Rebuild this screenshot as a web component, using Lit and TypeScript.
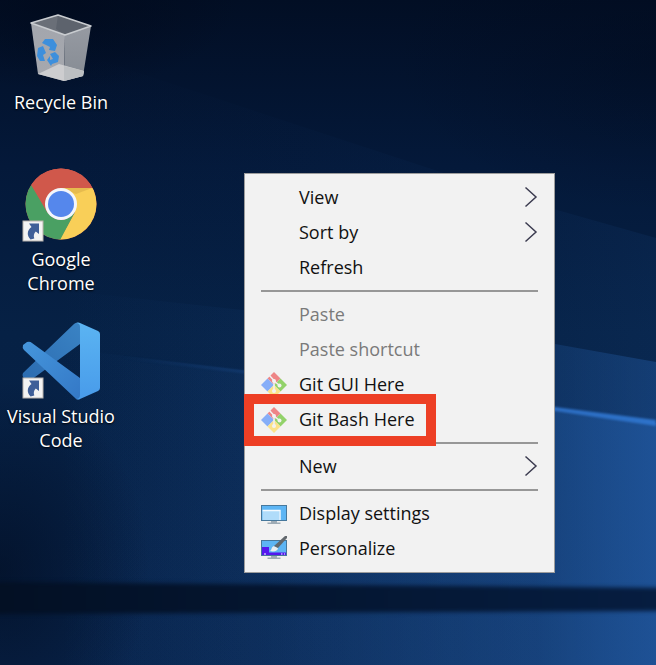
import { LitElement, html, svg, css, nothing } from "lit";
import { customElement } from "lit/decorators.js";

type Entry = { label: string; icon?: string; sub?: boolean; disabled?: boolean; marked?: boolean };

const GROUPS: Entry[][] = [
  [{ label: "View", sub: true }, { label: "Sort by", sub: true }, { label: "Refresh" }],
  [
    { label: "Paste", disabled: true },
    { label: "Paste shortcut", disabled: true },
    { label: "Git GUI Here", icon: "git" },
    { label: "Git Bash Here", icon: "git", marked: true },
  ],
  [{ label: "New", sub: true }],
  [
    { label: "Display settings", icon: "display" },
    { label: "Personalize", icon: "personalize" },
  ],
];

const shortcutArrow = svg`
  <rect x="1" y="55" width="20" height="20" fill="#f3f3f3" stroke="#b9b3ae"/>
  <path d="M7 57.500H17V68L13.800 65.500C11.800 67.500 11.300 69.500 12.300 72.500L8.500 73.500C4.500 69 5 64.500 9.500 61z" fill="#3f5f98"/>`;

const recycleBin = html`<svg class="art" viewBox="0 0 80 76" aria-hidden="true">
  <defs>
    <linearGradient id="bl" x1="0" y1="0" x2="0" y2="1"><stop offset="0" stop-color="#a3a6ad"/><stop offset="1" stop-color="#a6a8ae"/></linearGradient>
    <linearGradient id="br" x1="0" y1="0" x2="0" y2="1"><stop offset="0" stop-color="#969aa2"/><stop offset="1" stop-color="#858b93"/></linearGradient>
  </defs>
  <path d="M9 14 43 26 42 72 16 65z" fill="url(#bl)"/>
  <path d="M43 26 69 17 61 67 42 72z" fill="url(#br)"/>
  <path d="M16 65 37 55 62 62 61 67 42 72z" fill="#cdcdcf"/>
  <path d="M42 57 62 62 61 67 42 72z" fill="#bcbfc2"/>
  <path d="M9 14 36 6 69 17 43 26z" fill="#6a6f78"/>
  <path d="M36 6 69 17 43 26 34 20z" fill="#5d636d"/>
  <path d="M9 14 36 6 69 17 43 26z" fill="none" stroke="#c9ccd0" stroke-width="1.600" stroke-linejoin="round"/>
  <g fill="#3d8fdc">
    <path d="M20 34 23 30H31L35 36 33 42 27 41 28 38 24 36z"/>
    <path d="M16 39 21 37 24 44 21 46 23 52H18L15 47z"/>
    <path d="M28 45 33 43 37 47 36 53 30 55 29 57 25 51 28 47V51L31 50z"/>
  </g>
</svg>`;

const chrome = html`<svg class="art" viewBox="0 0 80 76" aria-hidden="true">
  <defs><clipPath id="cc"><circle cx="39" cy="38" r="35.500"/></clipPath></defs>
  <g clip-path="url(#cc)">
    <rect width="80" height="76" fill="#d0584b"/>
    <path d="M39 22H80V76H30L38 73 53 46z" fill="#f9cf58"/>
    <path d="M8 17 25 46Q32 55 42 54L53 46 37 76H0V0z" fill="#4aa063"/>
    <path d="M10 20 0 0H80V22H39Q26 23 24 41z" fill="#d0584b"/>
    <path d="M39 22H70L54 28z" fill="#d9ae48" opacity=".6"/>
  </g>
  <circle cx="39" cy="38" r="16" fill="#f4f6fb"/>
  <circle cx="39" cy="38" r="13" fill="#5587ec"/>
  ${shortcutArrow}
</svg>`;

const vscode = html`<svg class="art" viewBox="0 0 80 76" aria-hidden="true">
  <defs>
    <linearGradient id="v1" x1="0" y1="0" x2="0" y2="1"><stop offset="0" stop-color="#5bb4f2"/><stop offset="1" stop-color="#489bea"/></linearGradient>
    <linearGradient id="v2" x1="0" y1="0" x2="1" y2="1"><stop offset="0" stop-color="#4596dc"/><stop offset="1" stop-color="#3478c6"/></linearGradient>
    <linearGradient id="v3" x1="0" y1="1" x2="1" y2="0"><stop offset="0" stop-color="#2b6bb0"/><stop offset="1" stop-color="#3a83c4"/></linearGradient>
  </defs>
  <path d="M1 50 52 1Q54-1 58 0V21L9 57Q6 59 4 57L1 54Q0 52 1 50z" fill="url(#v3)"/>
  <path d="M2 27Q0 25 1 22L5 19Q8 18 10 20L58 55V76Q54 77 52 74z" fill="url(#v2)"/>
  <path d="M58 0 76 8Q78 9 78 11V65Q78 67 76 68L58 76Q56 77 54 76 58 76 58 72V4Q58 0 54 0 56-1 58 0z" fill="url(#v1)"/>
  ${shortcutArrow}
</svg>`;

const icons: Record<string, unknown> = {
  git: html`<svg class="icon" viewBox="0 0 26 26" aria-hidden="true">
    <path d="M13 0 19.500 6.500 13 13 6.500 6.500z" fill="#ee8586"/>
    <path d="M6.500 6.500 13 13 6.500 19.500 0 13z" fill="#86aef8"/>
    <path d="M19.500 6.500 26 13 19.500 19.500 13 13z" fill="#92d26a"/>
    <path d="M13 13 19.500 19.500 13 26 6.500 19.500z" fill="#fbe28a"/>
    <path d="M8 3 13 8.500V19M13 9l5 4" fill="none" stroke="#f2f2f2" stroke-width="1.500"/>
    <circle cx="13" cy="9" r="2" fill="#f2f2f2"/><circle cx="18.500" cy="13.500" r="2" fill="#f2f2f2"/><circle cx="13" cy="19" r="2" fill="#f2f2f2"/>
  </svg>`,
  display: html`<svg class="icon" viewBox="0 0 26 26" aria-hidden="true">
    <rect x=".5" y="4.500" width="25" height="15" fill="#5db5f4" stroke="#47789c"/>
    <path d="M1.500 10H18.500V19H1.500z" fill="#b0dcfa"/>
    <path d="M1.500 9.500H19V19" fill="none" stroke="#f4faff" stroke-width="1.400"/>
    <path d="M10 20h6v1.500h3.500v1.500h-13v-1.500H10z" fill="#9eabb5"/>
  </svg>`,
  personalize: html`<svg class="icon" viewBox="0 0 26 26" aria-hidden="true">
    <rect x=".5" y="4.500" width="25" height="15" fill="#5db5f4" stroke="#47789c"/>
    <path d="M1 11H8V16.500H25V19H1z" fill="#5417ee"/>
    <path d="M3 18h2M20 18h1.500M23 18h1" stroke="#fff"/>
    <path d="M9 15c2-1 1-4 4-5l4 2c0 3-4 4-8 3z" fill="#e9edf0"/>
    <path d="M13 10 24 0h2v2L17 12z" fill="#62686d"/>
    <path d="M10 20h6v1.500h3.500v1.500h-13v-1.500H10z" fill="#9eabb5"/>
  </svg>`,
};

const wallpaper = html`<svg class="wallpaper" viewBox="0 0 656 665" preserveAspectRatio="none" aria-hidden="true">
  <defs>
    <linearGradient id="w0" x1="0" y1="0" x2="0" y2="1">
      <stop offset="0" stop-color="#020e24"/><stop offset=".25" stop-color="#04193a"/>
      <stop offset=".5" stop-color="#062145"/><stop offset="1" stop-color="#08234a"/>
    </linearGradient>
    <linearGradient id="w1" gradientUnits="userSpaceOnUse" x1="60" y1="0" x2="656" y2="0">
      <stop offset="0" stop-color="#1f5499" stop-opacity="0"/><stop offset=".35" stop-color="#1f5499" stop-opacity=".2"/>
      <stop offset=".8" stop-color="#1f5499" stop-opacity=".6"/><stop offset="1" stop-color="#2158a0"/>
    </linearGradient>
    <linearGradient id="w2" gradientUnits="userSpaceOnUse" x1="120" y1="0" x2="656" y2="0">
      <stop offset="0" stop-color="#1d4f93" stop-opacity="0"/><stop offset=".3" stop-color="#1d4f93" stop-opacity=".5"/>
      <stop offset=".8" stop-color="#2c6cc0"/><stop offset="1" stop-color="#2e73ca"/>
    </linearGradient>
    <linearGradient id="w3" gradientUnits="userSpaceOnUse" x1="0" y1="0" x2="656" y2="0">
      <stop offset="0" stop-color="#031024"/><stop offset="1" stop-color="#061d40"/>
    </linearGradient>
    <radialGradient id="w4"><stop offset="0" stop-color="#010a1c" stop-opacity=".75"/><stop offset="1" stop-color="#010a1c" stop-opacity="0"/></radialGradient>
    <filter id="s1" x="-5%" y="-20%" width="110%" height="140%" color-interpolation-filters="sRGB"><feGaussianBlur stdDeviation="1"/></filter>
    <filter id="s2" filterUnits="userSpaceOnUse" x="-40" y="560" width="740" height="80" color-interpolation-filters="sRGB"><feGaussianBlur stdDeviation="2"/></filter>
  </defs>
  <rect width="656" height="665" fill="url(#w0)"/>
  <path d="M100 60 550 208 656 238V665H60V60z" fill="url(#w1)" opacity=".12"/>
  <path d="M60 290 555 344 656 362V665H60z" fill="url(#w1)" opacity=".45"/>
  <path d="M60 348 555 408 656 423V665H60z" fill="url(#w1)" opacity=".75"/>
  <path d="M120 356 555 407 656 420V426L555 411 120 358z" fill="url(#w2)" filter="url(#s1)"/>
  <ellipse cx="0" cy="570" rx="150" ry="190" fill="url(#w4)" opacity=".8"/>
  <ellipse cx="60" cy="0" rx="180" ry="90" fill="url(#w4)"/>
  <ellipse cx="656" cy="60" rx="260" ry="150" fill="url(#w4)" opacity=".5"/>
  <path d="M-20 582 680 588V611L-20 614z" fill="url(#w3)" filter="url(#s2)"/>
</svg>`;

@customElement("app-root")
export class AppRoot extends LitElement {
  static styles = css`
    :host { display: block; position: relative; min-height: 100vh; overflow: hidden; background: #04183a;
      font: 18px/24px "Open Sans", "Noto Sans", sans-serif; }
    * { box-sizing: border-box; }
    .wallpaper { position: absolute; inset: 0; width: 100%; height: 100%; }
    .desktop { position: relative; display: grid; grid-auto-rows: 157px; width: 122px; padding-top: 9px; }
    .shortcut { display: flex; flex-direction: column; align-items: center; gap: 5px; height: 144px; padding: 0;
      border: 0; background: none; color: #fff; font: inherit; text-align: center; text-shadow: 0 1px 2px #000; }
    .art { width: 80px; height: 76px; flex: none; margin-left: 2px; overflow: visible; }
    .name { width: 116px; }
    .menu { position: absolute; left: 244px; top: 173px; width: 311px; padding: 6px 0; background: #f2f2f2;
      border: 1px solid #9c9c9c; }
    .group { display: flex; flex-direction: column; }
    .rule { height: 2px; margin: 5px 16px; border: 0; background: #979797; }
    .item { position: relative; display: grid; grid-template-columns: 26px 1fr 14px; column-gap: 12px; align-items: center;
      height: 35px; padding: 0 16px; border: 0; background: none; color: #111; font: inherit; text-align: left; }
    .item:disabled { color: #7a7a7a; }
    .icon { width: 26px; height: 26px; }
    .label { grid-column: 2; padding-bottom: 2px; white-space: nowrap; }
    .chevron { width: 14px; height: 24px; padding-bottom: 2px; }
    .marker { position: absolute; z-index: 1; left: -1px; top: -8px; width: 192px; height: 52px;
      border: 10px solid #ed3f25; pointer-events: none; }
  `;

  private item(e: Entry) {
    return html`<button class="item" role="menuitem" ?disabled=${e.disabled}>
      ${e.icon ? icons[e.icon] : nothing}
      <span class="label">${e.label}</span>
      ${e.sub
        ? html`<svg class="chevron" viewBox="0 0 14 22" aria-hidden="true"><path d="M1.500 1.500 12 11 1.500 20.500" fill="none" stroke="#3c3c50" stroke-width="1.500"/></svg>`
        : nothing}
      ${e.marked ? html`<span class="marker"></span>` : nothing}
    </button>`;
  }

  render() {
    return html`
      ${wallpaper}
      <main class="desktop">
        <button class="shortcut">${recycleBin}<span class="name">Recycle Bin</span></button>
        <button class="shortcut">${chrome}<span class="name">Google Chrome</span></button>
        <button class="shortcut">${vscode}<span class="name">Visual Studio Code</span></button>
      </main>
      <div class="menu" role="menu">
        ${GROUPS.map((g, i) => html`${i ? html`<hr class="rule" />` : nothing}<div class="group" role="group">${g.map((e) => this.item(e))}</div>`)}
      </div>
    `;
  }
}
